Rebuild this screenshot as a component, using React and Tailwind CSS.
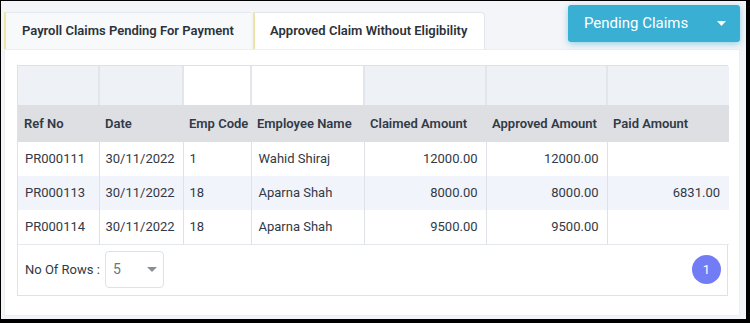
import { useState } from "react";

const rows = [
  { ref: "PR000111", date: "30/11/2022", code: "1", name: "Wahid Shiraj", claimed: "12000.00", approved: "12000.00", paid: "" },
  { ref: "PR000113", date: "30/11/2022", code: "18", name: "Aparna Shah", claimed: "8000.00", approved: "8000.00", paid: "6831.00" },
  { ref: "PR000114", date: "30/11/2022", code: "18", name: "Aparna Shah", claimed: "9500.00", approved: "9500.00", paid: "" },
];

const headers = ["Ref No", "Date", "Emp Code", "Employee Name", "Claimed Amount", "Approved Amount", "Paid Amount"];

const App = () => {
  const [tab, setTab] = useState(0);

  return (
    <div className="w-[750px] h-[323px] border-black border-t border-l border-r-4 border-b-4 bg-[#f3f5f9] font-['Roboto',sans-serif] text-[#313a46] overflow-hidden">
      <div className="flex h-[48px] items-start">
        <div className="flex items-end h-full ml-[3px]">
          <button
            onClick={() => setTab(0)}
            className="w-[247px] h-[37px] border-l-2 border-t border-l-[#ebe5a6] border-t-[#e5e8ec] bg-[#f8f9fb] text-left pl-[16px] text-[13px] font-semibold text-[#2c323a]"
          >
            Payroll Claims Pending For Payment
          </button>
          <button
            onClick={() => setTab(1)}
            className="w-[232px] h-[37px] ml-[2px] border-l-2 border-t border-r border-l-[#ebe5a6] border-t-[#e1e4e8] border-r-[#e1e4e8] rounded-tr-[4px] bg-white text-left pl-[15px] text-[13px] font-semibold text-[#2c323a]"
          >
            Approved Claim Without Eligibility
          </button>
        </div>
        <button className="ml-auto mr-[6px] mt-[4px] w-[172px] h-[37px] rounded-[3px] bg-[#3aafd4] shadow-[0_2px_6px_0_rgba(57,175,209,0.5)] flex items-center pl-[16px] pr-[14px] text-white text-[15px]">
          <span>Pending Claims</span>
          <svg className="ml-auto" width="9" height="5" viewBox="0 0 9 5">
            <path d="M0 0 H9 L4.5 5 Z" fill="#fff" />
          </svg>
        </button>
      </div>

      <div className="ml-[3px] w-[736px] h-[267px] bg-white border border-[#eceef2] pt-[15px] pl-[12px]">
        <div className="w-[711px] border border-[#dee2e6]">
          <table className="table-fixed border-collapse w-full text-[13px]">
            <colgroup>
              <col className="w-[81px]" />
              <col className="w-[84px]" />
              <col className="w-[68px]" />
              <col className="w-[113px]" />
              <col className="w-[122px]" />
              <col className="w-[121px]" />
              <col className="w-[122px]" />
            </colgroup>
            <thead>
              <tr className="h-[39px] bg-[#eef1f6]">
                {headers.map((h, i) => (
                  <td
                    key={h}
                    className={`border-r-2 border-[#e2e6eb] last:border-r-0 ${i === 2 || i === 3 ? "bg-white" : ""}`}
                  />
                ))}
              </tr>
              <tr className="h-[37px] bg-[#dedfe3]">
                {headers.map((h) => (
                  <th key={h} className="text-left font-semibold px-[6px] text-[#313a46] whitespace-nowrap">
                    {h}
                  </th>
                ))}
              </tr>
            </thead>
            <tbody>
              {rows.map((r, i) => (
                <tr key={r.ref} className={`h-[34px] ${i === 1 ? "bg-[#f1f4fa]" : "bg-white"} ${i === 2 ? "border-b border-[#e5e8ec]" : ""}`}>
                  <td className="border-r border-[#dee2e6] pl-[7px]">{r.ref}</td>
                  <td className="border-r border-[#dee2e6] pl-[6px]">{r.date}</td>
                  <td className="border-r border-[#dee2e6] pl-[6px]">{r.code}</td>
                  <td className="border-r border-[#dee2e6] pl-[7px]">{r.name}</td>
                  <td className="border-r border-[#dee2e6] text-right pr-[8px]">{r.claimed}</td>
                  <td className="border-r border-[#dee2e6] text-right pr-[8px]">{r.approved}</td>
                  <td className="text-right pr-[9px]">{r.paid}</td>
                </tr>
              ))}
            </tbody>
          </table>
          <div className="h-[50px] flex items-center pl-[7px] pr-[6px]">
            <span className="text-[13px] text-[#313a46]">No Of Rows :</span>
            <div className="ml-[5px] w-[59px] h-[37px] border border-[#dee2e6] rounded-[4px] flex items-center pl-[7px] pr-[6px]">
              <span className="text-[14px] text-[#6c757d]">5</span>
              <svg className="ml-auto" width="10" height="5" viewBox="0 0 10 5">
                <path d="M0 0 H10 L5 5 Z" fill="#8a8f96" />
              </svg>
            </div>
            <div className="ml-auto w-[29px] h-[29px] rounded-full bg-[#727cf5] flex items-center justify-center text-white text-[13px]">
              1
            </div>
          </div>
        </div>
      </div>
    </div>
  );
};

export default App;
